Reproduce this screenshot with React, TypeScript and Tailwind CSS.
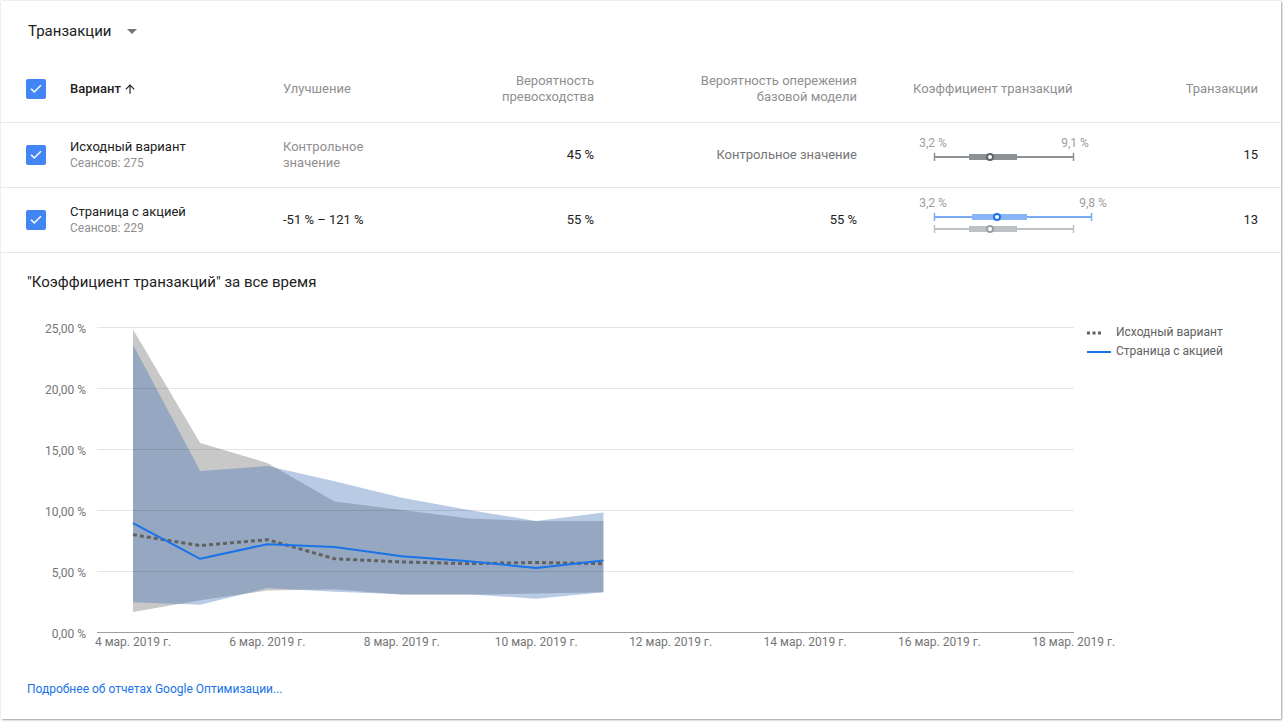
import React from "react";

const font = { fontFamily: "Roboto, 'Noto Sans', Arial, sans-serif" };

const Check = () => (
  <div className="w-[20px] h-[20px] rounded-[2px] bg-[#4285f4] flex items-center justify-center">
    <svg width="14" height="14" viewBox="0 0 24 24">
      <path d="M4.5 12.5l4.5 4.5L19.5 6.5" fill="none" stroke="#fff" strokeWidth="2.6" strokeLinecap="square" />
    </svg>
  </div>
);

type BP = { lo: number; hi: number; b1: number; b2: number; m: number; y: number; line: string; box: string; dot: string };

const BoxPlot = ({ labels, plots }: { labels: { x: number; t: string; y: number }[]; plots: BP[] }) => (
  <svg width="220" height="64" viewBox="0 0 220 64" className="overflow-visible">
    {labels.map((l, i) => (
      <text key={i} x={l.x} y={l.y} textAnchor="middle" dominantBaseline="central" fontSize="12" fill="#9e9e9e" style={font}>
        {l.t}
      </text>
    ))}
    {plots.map((p, i) => (
      <g key={i}>
        <line x1={p.lo} x2={p.hi} y1={p.y} y2={p.y} stroke={p.line} strokeWidth="2" />
        <line x1={p.lo + 0.5} x2={p.lo + 0.5} y1={p.y - 4} y2={p.y + 4} stroke={p.line} strokeWidth="1.5" />
        <line x1={p.hi - 0.5} x2={p.hi - 0.5} y1={p.y - 4} y2={p.y + 4} stroke={p.line} strokeWidth="1.5" />
        <rect x={p.b1} y={p.y - 3} width={p.b2 - p.b1} height="6" fill={p.box} />
        <circle cx={p.m} cy={p.y} r="3" fill="#fff" stroke={p.dot} strokeWidth="2" />
      </g>
    ))}
  </svg>
);

const days = [4, 5, 6, 7, 8, 9, 10, 11];
const X = (d: number) => 133 + (d - 4) * 67.2;
const Y = (p: number) => 632 - p * 12.2;

const grayUp = [24.8, 15.5, 13.85, 10.7, 10.0, 9.3, 9.1, 9.1];
const grayLo = [1.64, 2.6, 3.4, 3.5, 3.06, 3.06, 3.15, 3.25];
const blueUp = [23.55, 13.2, 13.6, 12.35, 11.0, 10.0, 9.1, 9.8];
const blueLo = [2.43, 2.24, 3.6, 3.3, 3.1, 3.1, 2.73, 3.25];
const blueLine = [8.93, 6.0, 7.2, 6.97, 6.2, 5.8, 5.25, 5.87];
const grayLine = [7.98, 7.08, 7.57, 6.0, 5.74, 5.6, 5.7, 5.6];

const band = (up: number[], lo: number[]) => {
  const top = days.map((d, i) => `${X(d)},${Y(up[i])}`);
  const bot = days.map((d, i) => `${X(d)},${Y(lo[i])}`).reverse();
  return [...top, ...bot].join(" ");
};
const line = (v: number[]) => days.map((d, i) => `${X(d)},${Y(v[i])}`).join(" ");

const Chart = () => {
  const grid = [25, 20, 15, 10, 5];
  const ylabels = ["25,00 %", "20,00 %", "15,00 %", "10,00 %", "5,00 %", "0,00 %"];
  const xl = [4, 6, 8, 10, 12, 14, 16, 18];
  return (
    <svg width="1055" height="360" viewBox="27 300 1055 360" className="overflow-visible shrink-0">
      <polygon points={band(grayUp, grayLo)} fill="#c8c8c8" />
      <polygon points={band(blueUp, blueLo)} fill="rgb(58,108,180)" fillOpacity="0.36" />
      {grid.map((g) => (
        <line key={g} x1="97" x2="1074" y1={Math.round(Y(g)) + 0.5} y2={Math.round(Y(g)) + 0.5} stroke="rgba(0,0,0,0.1)" strokeWidth="1" />
      ))}
      <line x1="97" x2="1074" y1="632.5" y2="632.5" stroke="#9e9e9e" strokeWidth="1" />
      {ylabels.map((t, i) => (
        <text key={t} x="86" y={Math.round(Y(25 - i * 5)) + 1.5} textAnchor="end" dominantBaseline="central" fontSize="12" fill="#757575" style={font}>
          {t}
        </text>
      ))}
      {xl.map((d) => (
        <text key={d} x={X(d)} y="641.5" textAnchor="middle" dominantBaseline="central" fontSize="12" fill="#757575" style={font}>
          {`${d} мар. 2019 г.`}
        </text>
      ))}
      <polyline points={line(grayLine)} fill="none" stroke="#616161" strokeWidth="3" strokeDasharray="4 3" />
      <polyline points={line(blueLine)} fill="none" stroke="#1a73e8" strokeWidth="2" strokeLinejoin="round" />
    </svg>
  );
};

export default function App() {
  const cols = "grid grid-cols-[44px_213px_191px_120px_263px_243px_158px] pl-[25px] items-center";
  return (
    <div className="w-[1283px] h-[722px] bg-white" style={font}>
      <div className="ml-px mt-px w-[1280px] h-[718px] bg-white shadow-[1px_1px_2px_rgba(0,0,0,0.35),0_0_1px_rgba(0,0,0,0.25)]">
        <div className="h-[55px] pt-[20px] pl-[27px] flex items-start">
          <span className="text-[15px] leading-[20px] text-[#212121]">Транзакции</span>
          <svg width="10" height="5" viewBox="0 0 10 5" className="ml-[16px] mt-[8px]">
            <polygon points="0,0 10,0 5,5" fill="#757575" />
          </svg>
        </div>

        <div className={`${cols} h-[67px] border-b border-[#e8e8e8] text-[13px] leading-[16px]`}>
          <Check />
          <div className="flex items-center gap-[2px] text-[#212121] font-medium">
            Вариант
            <svg width="14" height="14" viewBox="0 0 24 24">
              <path d="M4 12l1.41 1.41L11 7.83V20h2V7.83l5.58 5.59L20 12l-8-8-8 8z" fill="#212121" />
            </svg>
          </div>
          <div className="text-[#8f8f8f]">Улучшение</div>
          <div className="text-[#8f8f8f] text-right">
            Вероятность
            <br />
            превосходства
          </div>
          <div className="text-[#8f8f8f] text-right">
            Вероятность опережения
            <br />
            базовой модели
          </div>
          <div className="text-[#8f8f8f] pl-[56px]">Коэффициент транзакций</div>
          <div className="text-[#8f8f8f] text-right">Транзакции</div>
        </div>

        <div className={`${cols} h-[65px] border-b border-[#e8e8e8] text-[13px] leading-[16px]`}>
          <Check />
          <div>
            <div className="text-[#212121]">Исходный вариант</div>
            <div className="text-[#8f8f8f] text-[12px]">Сеансов: 275</div>
          </div>
          <div className="text-[#8f8f8f]">
            Контрольное
            <br />
            значение
          </div>
          <div className="text-right text-[#212121]">45 %</div>
          <div className="text-right text-[#757575]">Контрольное значение</div>
          <div className="pl-[56px] h-[64px]">
            <BoxPlot
              labels={[
                { x: 20, t: "3,2 %", y: 20 },
                { x: 162, t: "9,1 %", y: 20 },
              ]}
              plots={[{ lo: 21, hi: 161, b1: 56, b2: 104, m: 77, y: 34, line: "#8e9194", box: "#8e9194", dot: "#5f6368" }]}
            />
          </div>
          <div className="text-right text-[#212121]">15</div>
        </div>

        <div className={`${cols} h-[65px] border-b border-[#e8e8e8] text-[13px] leading-[16px]`}>
          <Check />
          <div>
            <div className="text-[#212121]">Страница с акцией</div>
            <div className="text-[#8f8f8f] text-[12px]">Сеансов: 229</div>
          </div>
          <div className="text-[#212121]">-51 % – 121 %</div>
          <div className="text-right text-[#212121]">55 %</div>
          <div className="text-right text-[#212121]">55 %</div>
          <div className="pl-[56px] h-[64px]">
            <BoxPlot
              labels={[
                { x: 20, t: "3,2 %", y: 15 },
                { x: 180, t: "9,8 %", y: 15 },
              ]}
              plots={[
                { lo: 21, hi: 179, b1: 59, b2: 114, m: 84, y: 29, line: "#7baaf7", box: "#8ab4f8", dot: "#1a73e8" },
                { lo: 21, hi: 161, b1: 56, b2: 104, m: 77, y: 41, line: "#bdc1c6", box: "#bdc1c6", dot: "#9aa0a6" },
              ]}
            />
          </div>
          <div className="text-right text-[#212121]">13</div>
        </div>

        <div className="pt-[19px] pl-[26px]">
          <div className="text-[15px] leading-[20px] text-[#212121]">"Коэффициент транзакций" за все время</div>
          <div className="flex mt-[8px]">
            <Chart />
            <div className="ml-[5px] pt-[23px] flex flex-col text-[12px] leading-[19px] text-[#616161]">
              <div className="flex items-center gap-[5px]">
                <svg width="24" height="4" viewBox="0 0 24 4">
                  <line x1="0" x2="14" y1="2" y2="2" stroke="#616161" strokeWidth="3" strokeDasharray="3 2.5" />
                </svg>
                Исходный вариант
              </div>
              <div className="flex items-center gap-[5px]">
                <svg width="24" height="4" viewBox="0 0 24 4">
                  <line x1="0" x2="24" y1="2" y2="2" stroke="#1a73e8" strokeWidth="2" />
                </svg>
                Страница с акцией
              </div>
            </div>
          </div>
          <div className="mt-[21px] text-[12px] leading-[16px] text-[#1a73e8]">Подробнее об отчетах Google Оптимизации...</div>
        </div>
      </div>
    </div>
  );
}
